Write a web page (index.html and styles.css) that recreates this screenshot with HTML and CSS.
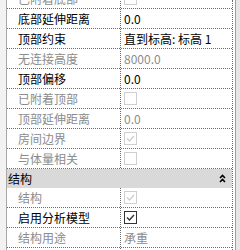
FILE: index.html
```html
<!DOCTYPE html>
<html>
<head>
<meta charset="utf-8">
<title>属性</title>
<link rel="stylesheet" href="styles.css">
</head>
<body>
    <div class="panel">
        <div class="gutter"></div>
        <div class="grid">
            <div class="rows">
                <div class="row off"><div class="name">已附着底部</div><div class="value"><span class="check"></span></div></div>
                <div class="row"><div class="name">底部延伸距离</div><div class="value">0.0</div></div>
                <div class="row"><div class="name">顶部约束</div><div class="value">直到标高: 标高 1</div></div>
                <div class="row off"><div class="name">无连接高度</div><div class="value">8000.0</div></div>
                <div class="row"><div class="name">顶部偏移</div><div class="value">0.0</div></div>
                <div class="row off"><div class="name">已附着顶部</div><div class="value"><span class="check"></span></div></div>
                <div class="row off"><div class="name">顶部延伸距离</div><div class="value">0.0</div></div>
                <div class="row off"><div class="name">房间边界</div><div class="value"><span class="check"><svg viewBox="0 0 11 11"><path d="M2 5.5 L4.5 8 L9 3"/></svg></span></div></div>
                <div class="row off"><div class="name">与体量相关</div><div class="value"><span class="check"></span></div></div>
                <div class="group">
                    <span>结构</span>
                    <svg class="fold" viewBox="0 0 7 9"><path d="M1 4 L3.5 1.5 L6 4"/><path d="M1 8 L3.5 5.5 L6 8"/></svg>
                </div>
                <div class="row off"><div class="name">结构</div><div class="value"><span class="check"><svg viewBox="0 0 11 11"><path d="M2 5.5 L4.5 8 L9 3"/></svg></span></div></div>
                <div class="row"><div class="name">启用分析模型</div><div class="value"><span class="check"><svg viewBox="0 0 11 11"><path d="M2 5.5 L4.5 8 L9 3"/></svg></span></div></div>
                <div class="row off"><div class="name">结构用途</div><div class="value">承重</div></div>
                <div class="row"><div class="name"></div><div class="value"></div></div>
            </div>
        </div>
        <div class="scroll"></div>
    </div>
</body>
</html>
```
FILE: styles.css
```css
body {
    margin: 0;
    background-color: #fff;
    font-family: "Noto Sans CJK SC", "Liberation Sans", sans-serif;
    font-size: 12px;
    color: #000;
}
.panel {
    display: flex;
    height: 250px;
    overflow: hidden;
}
.gutter {
    width: 6px;
    background-color: #f2f2f2;
    border-right: 1px solid #a8a8a8;
}
.grid {
    width: 225px;
    border-right: 1px dotted #6c6c6c;
}
.rows {
    margin-top: -11px;
}
.row {
    display: flex;
    height: 19px;
    line-height: 19px;
    border-bottom: 1px dotted #6c6c6c;
}
.name {
    width: 102px;
    padding-left: 11px;
    border-right: 1px dotted #6c6c6c;
    white-space: nowrap;
}
.value {
    flex: 1;
    padding-left: 3px;
    display: flex;
    align-items: center;
    white-space: nowrap;
}
.off {
    color: #8c8c8c;
}
.check {
    width: 11px;
    height: 11px;
    border: 1px solid #333;
    background-color: #fff;
    display: flex;
}
.check svg {
    width: 11px;
    height: 11px;
    fill: none;
    stroke: #333;
    stroke-width: 1.4;
}
.off .check {
    border-color: #cfcfcf;
}
.off .check svg {
    stroke: #cfcfcf;
}
.group {
    display: flex;
    justify-content: space-between;
    align-items: center;
    height: 19px;
    padding: 0 6px 0 1px;
    background-color: #d9d9d9;
}
.fold {
    width: 7px;
    height: 9px;
    fill: none;
    stroke: #000;
    stroke-width: 1.6;
}
.scroll {
    flex: 1;
    margin-left: 2px;
    background-color: #e6e6e6;
    border-left: 1px solid #a0a0a0;
}
```
